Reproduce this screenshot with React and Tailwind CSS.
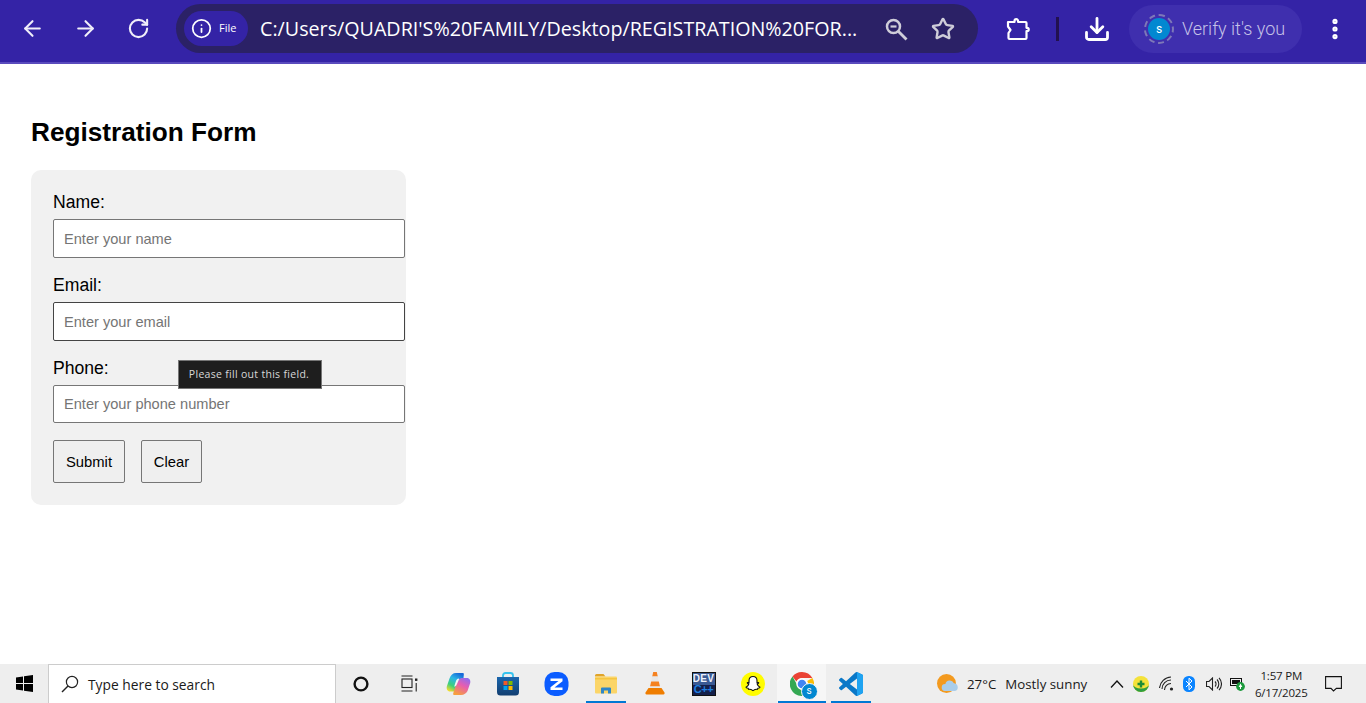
import React from "react";
import { ArrowLeft, ArrowRight, RotateCw, Info, Star, Download, EllipsisVertical } from "lucide-react";

const Puzzle = () => (
  <svg width="26" height="26" viewBox="0 0 26 26" fill="none" stroke="white" strokeWidth="2.200" strokeLinejoin="round">
    <path d="M3 6h6.500V5a1.800 1.800 0 0 1 3.600 0v1h7.400a1 1 0 0 1 1 1v4.800h.6a1.600 1.600 0 0 1 0 3.200h-.6v7a1 1 0 0 1-1 1H4.500a1 1 0 0 1-1-1v-5L5.500 14 3 10.500z" />
  </svg>
);

const ZoomGlass = () => (
  <svg width="24" height="24" viewBox="0 0 24 24" fill="none" stroke="#cfcdd9" strokeWidth="2.500">
    <circle cx="9.500" cy="9.500" r="6.500" />
    <path d="M6.500 9.500h6" strokeWidth="2.200" />
    <path d="m14.500 14.500 8 8" strokeWidth="2.800" />
  </svg>
);

const Win = () => (
  <svg width="17" height="17" viewBox="0 0 17 17" fill="#000">
    <path d="M0 2.400 7 1.400V8H0zM8 1.300 17 0v8H8zM0 9h7v6.600l-7-1zM8 9h9v8l-9-1.300z" />
  </svg>
);

const SearchGlass = () => (
  <svg width="18" height="18" viewBox="0 0 18 18" fill="none" stroke="#222" strokeWidth="1.200">
    <circle cx="11" cy="7" r="5.600" />
    <path d="M7 11 1 17" strokeWidth="1.500" />
  </svg>
);

const Cortana = () => (
  <svg width="16" height="16" viewBox="0 0 16 16" fill="none" stroke="#111" strokeWidth="2.400">
    <circle cx="8" cy="8" r="6.400" />
  </svg>
);

const TaskView = () => (
  <svg width="17" height="17" viewBox="0 0 17 17" fill="none" stroke="#222" strokeWidth="1.100">
    <path d="M.5 1h11M.5 16h11" />
    <rect x="1" y="4" width="10" height="8.500" />
    <rect x="14" y="3.500" width="2.400" height="2.400" fill="#222" stroke="none" />
    <path d="M15.200 8v8.500" />
  </svg>
);

const Copilot = () => (
  <svg width="25" height="24" viewBox="0 0 25 24">
    <defs>
      <linearGradient id="cpa" x1="0.700" y1="0" x2="0.200" y2="1">
        <stop offset="0" stopColor="#1769d8" />
        <stop offset="0.350" stopColor="#2bb6e6" />
        <stop offset="0.700" stopColor="#3fcf7a" />
        <stop offset="1" stopColor="#f4dc2c" />
      </linearGradient>
      <linearGradient id="cpb" x1="0.800" y1="0" x2="0.300" y2="1">
        <stop offset="0" stopColor="#8f6cf0" />
        <stop offset="0.450" stopColor="#e75db0" />
        <stop offset="1" stopColor="#f7a03c" />
      </linearGradient>
    </defs>
    <path d="M10 1h7c.8 0 1 .8.800 1.500L17.500 6l-2 5.500-3 6c-.8 1.500-2.500 2-4 2H4C1.500 19.500.2 17 .8 14.500L3.500 6.500C4.500 3 7 1 10 1z" fill="url(#cpa)" />
    <path d="M15 23H8c-.8 0-1-.8-.8-1.500l.4-1.500 2-6 3-6c.8-1.500 2.500-2 4-2H21c2.500 0 3.800 2.500 3.200 5l-2.700 8C20.500 21 18 23 15 23z" fill="url(#cpb)" />
    <path d="M12.500 6.500c-1 .3-2 1-2.500 2.500l-1.800 5.500c.7 0 1.700-.4 2.300-1.500l2.500-5.500c.2-.5.200-.8-.5-1z" fill="#f4f4f4" />
  </svg>
);

const Store = () => (
  <svg width="24" height="24" viewBox="0 0 24 24">
    <defs>
      <linearGradient id="stg" x1="0" y1="0" x2="0" y2="1">
        <stop offset="0" stopColor="#1a66ad" />
        <stop offset="1" stopColor="#123e70" />
      </linearGradient>
    </defs>
    <path d="M7 6V3.500C7 2 8 1 9.500 1h5C16 1 17 2 17 3.500V6" fill="none" stroke="#36c3ee" strokeWidth="1.800" />
    <path d="M1 5h22v15a3.500 3.500 0 0 1-3.500 3.500h-15A3.500 3.500 0 0 1 1 20z" fill="url(#stg)" />
    <rect x="7.500" y="9" width="4" height="4" fill="#f05a28" />
    <rect x="12.500" y="9" width="4" height="4" fill="#7fba00" />
    <rect x="7.500" y="14" width="4" height="4" fill="#00a4ef" />
    <rect x="12.500" y="14" width="4" height="4" fill="#ffb900" />
  </svg>
);

const Zoom = () => (
  <svg width="25" height="24" viewBox="0 0 25 24">
    <rect x="0.500" y="0" width="24" height="24" rx="10" fill="#0b5cff" />
    <path d="M6.500 6.500h12v2.800l-8 6.200h8v2.500h-12v-2.800l8-6.200h-8z" fill="#fff" />
  </svg>
);

const Explorer = () => (
  <svg width="22" height="20" viewBox="0 0 22 20">
    <path d="M0 1.500A1.500 1.500 0 0 1 1.500 0h7l2 2.500H0z" fill="#e0a42a" />
    <rect x="0" y="2.500" width="22" height="17" rx="1" fill="#fbd568" />
    <rect x="0" y="4" width="22" height="1.500" fill="#f5c542" />
    <path d="M6 19.500v-5a1 1 0 0 1 1-1h8a1 1 0 0 1 1 1v5h-3v-3h-4v3z" fill="#2f86c7" />
  </svg>
);

const Vlc = () => (
  <svg width="20" height="23" viewBox="0 0 20 23">
    <path d="M8.200 0h3.600l1 4.500H7.200z" fill="#f58220" />
    <path d="M7.200 4.500h5.600l1 5H6.200z" fill="#e8e8e8" />
    <path d="M6.200 9.500h7.600l1.200 5H5z" fill="#f58220" />
    <path d="M5 14.500h10l.6 2H4.400z" fill="#e8e8e8" />
    <path d="M3.500 16h13l3 4.500c.3 1-.2 2-1 2H1.500c-.8 0-1.300-1-1-2z" fill="#ef7d00" />
  </svg>
);

const DevCpp = () => (
  <div className="flex h-[24px] w-[24px] flex-col items-center overflow-hidden border border-[#111] bg-[#14204a] font-['Liberation_Sans',sans-serif] font-bold leading-none">
    <span className="flex h-[12px] w-full items-center justify-center bg-[#3a5a94] text-[10px] tracking-[0.3px] text-[#eef2fa]">DEV</span>
    <span className="mt-[-1px] text-[11px] tracking-[-0.5px] text-[#1f7fe0]">C++</span>
  </div>
);

const Snap = () => (
  <svg width="24" height="24" viewBox="0 0 24 24">
    <circle cx="12" cy="12" r="12" fill="#fffc00" />
    <path d="M12 4.500c2.600 0 4 1.900 4 4.200v2l1.500-.2c.5.400.2 1-1.300 1.500.4 1.400 1.500 2.700 2.800 3.200 0 .7-1 1-2.100 1.100l-.4 1c-1.600-.3-2.700.1-4.500 1.300-1.800-1.200-2.900-1.600-4.500-1.300l-.4-1C6 16.200 5 15.900 5 15.200c1.300-.5 2.400-1.800 2.800-3.200-1.500-.5-1.800-1.100-1.300-1.500l1.500.2v-2c0-2.300 1.400-4.200 4-4.200z" fill="#fff" stroke="#111" strokeWidth="1.100" />
  </svg>
);

const Chrome = () => (
  <div className="relative h-[24px] w-[24px]">
    <svg width="24" height="24" viewBox="0 0 24 24">
      <path d="M12 0a12 12 0 0 1 10.400 6H12a6 6 0 0 0-5.600 3.600L2.500 4.500A12 12 0 0 1 12 0z" fill="#ea4335" />
      <path d="M22.400 6A12 12 0 0 1 12 24l5.200-9A6 6 0 0 0 17.200 9z" fill="#fbbc05" />
      <path d="M12 24A12 12 0 0 1 2.500 4.500l5 9A6 6 0 0 0 12 18z" fill="#34a853" />
      <circle cx="12" cy="12" r="5" fill="#4285f4" stroke="#fff" strokeWidth="1.400" />
    </svg>
    <span className="absolute bottom-[-4px] right-[-4px] flex h-[17px] w-[17px] items-center justify-center rounded-full border border-[#f6f6f6] bg-[#0288d1] font-['Roboto',sans-serif] text-[10px] leading-none text-white">s</span>
  </div>
);

const VSCode = () => (
  <svg width="24" height="24" viewBox="0 0 24 24">
    <path d="M23.150 2.587 18.210.21a1.494 1.494 0 0 0-1.705.29l-9.460 8.630-4.120-3.128a.999.999 0 0 0-1.276.057L.327 7.261A1 1 0 0 0 .326 8.740L3.899 12 .326 15.260a1 1 0 0 0 .001 1.479L1.650 17.940a.999.999 0 0 0 1.276.057l4.120-3.128 9.460 8.630a1.492 1.492 0 0 0 1.704.290l4.942-2.377A1.500 1.500 0 0 0 24 20.060V3.939a1.500 1.500 0 0 0-.850-1.352zm-5.146 14.861L10.826 12l7.178-5.448v10.896z" fill="#0a78c8" />
    <path d="M18.004 0.100 23.150 2.587A1.500 1.500 0 0 1 24 3.939V20.060a1.500 1.500 0 0 1-.850 1.352L18.004 23.900V0.100z" fill="#1fa3f1" />
  </svg>
);

const Weather = () => (
  <svg width="22" height="21" viewBox="0 0 22 21">
    <circle cx="9.500" cy="10.500" r="9.500" fill="#f39a1f" />
    <path d="M8 18a3.500 3.500 0 0 1 .4-7 4.500 4.500 0 0 1 8.500-.8A4 4 0 0 1 18 18z" fill="#a9cdea" />
  </svg>
);

const Caret = () => (
  <svg width="14" height="8" viewBox="0 0 14 8" fill="none" stroke="#111" strokeWidth="1.300">
    <path d="M1 7.500 7 1l6 6.500" />
  </svg>
);

const GreenTray = () => (
  <svg width="16" height="16" viewBox="0 0 16 16">
    <circle cx="8" cy="8" r="8" fill="#f4e23a" />
    <path d="M0 8a8 8 0 0 0 16 0 8 4.500 0 0 1-16 0z" fill="#2f9e3f" />
    <path d="M6.800 4.500h2.400v2.300h2.300v2.400H9.200v2.300H6.800V9.200H4.500V6.800h2.300z" fill="#1c8c36" />
  </svg>
);

const WifiTray = () => (
  <svg width="15" height="15" viewBox="0 0 15 15" fill="none" stroke="#222" strokeWidth="1.100">
    <path d="M.5 12A12 12 0 0 1 12 1M3 13a9 9 0 0 1 9-9M5.500 14A6.500 6.500 0 0 1 12 7.500" />
    <circle cx="12.500" cy="13" r="1.600" fill="#222" stroke="none" />
  </svg>
);

const Bt = () => (
  <svg width="12" height="16" viewBox="0 0 12 16">
    <rect width="12" height="16" rx="5.500" fill="#0a84ff" />
    <path d="M3 5l6 6-3 2.800V2.200L9 5l-6 6" fill="none" stroke="#fff" strokeWidth="1" />
  </svg>
);

const Vol = () => (
  <svg width="16" height="14" viewBox="0 0 16 14" fill="none" stroke="#222" strokeWidth="1.100">
    <path d="M.5 4.500h2.500L6.500 1v12L3 9.500H.5z" />
    <path d="M9 4.500a3.500 3.500 0 0 1 0 5M11 2.500a6.500 6.500 0 0 1 0 9M13 .8a9 9 0 0 1 0 12.400" />
  </svg>
);

const Batt = () => (
  <svg width="15" height="14" viewBox="0 0 15 14">
    <rect x="0.500" y="1.500" width="11" height="7" fill="none" stroke="#111" />
    <rect x="2" y="3" width="8" height="4" fill="#111" />
    <circle cx="10.500" cy="9.500" r="4.400" fill="#1c9a3c" />
    <path d="M10.500 6.500 8.700 10h3.600z" fill="#fff" />
    <rect x="10" y="10" width="1" height="2" fill="#fff" />
  </svg>
);

const Notif = () => (
  <svg width="17" height="16" viewBox="0 0 17 16" fill="none" stroke="#111" strokeWidth="1.100">
    <path d="M.6.600h15.800v11.800h-5L8.500 15 6 12.400H.6z" />
  </svg>
);

const Slot = ({ children, active, open }) => (
  <div className={`relative flex h-full w-[49px] items-center justify-center ${active ? "bg-[#f6f6f6]" : ""}`}>
    {children}
    {open && <span className={`absolute bottom-0 left-1/2 h-[2px] -translate-x-1/2 bg-[#0078d4] ${active ? "w-[48px]" : "w-[40px]"}`} />}
  </div>
);

const Field = ({ label, placeholder, dark, h, mb }) => (
  <div className={mb}>
    <label className="block text-[17.6px] leading-[20px] text-black">{label}</label>
    <input
      placeholder={placeholder}
      className={`mt-[7px] block w-[352px] rounded-[2px] border bg-white px-[10px] text-[14.6px] placeholder:text-[#757575] outline-none ${h} ${dark ? "border-[#444444]" : "border-[#767676]"}`}
    />
  </div>
);

export default function App() {
  return (
    <div className="flex h-[703px] w-[1366px] flex-col overflow-hidden bg-white font-['Liberation_Sans',Arial,sans-serif]">
      <header className="flex h-[64px] shrink-0 items-start border-b-2 border-[#5a4bbd] bg-[#3423a6] pt-[4px] text-white">
        <div className="flex h-[49px] w-[176px] shrink-0 items-center pl-[20px]">
          <ArrowLeft size={25} strokeWidth={2} className="text-[#f0eef9]" />
          <ArrowRight size={25} strokeWidth={2} className="ml-[28px] text-[#f0eef9]" />
          <RotateCw size={23} strokeWidth={2.2} className="ml-[29px] text-[#f0eef9]" />
        </div>
        <div className="flex h-[49px] w-[802px] shrink-0 items-center rounded-full bg-[#2b2166] pl-[8px]">
          <div className="flex h-[35px] w-[64px] items-center gap-[7px] rounded-full bg-[#3423a6] pl-[7px]">
            <Info size={21} strokeWidth={2} />
            <span className="font-['Open_Sans',sans-serif] text-[11px]">File</span>
          </div>
          <span className="ml-[12px] w-[600px] whitespace-nowrap font-['Open_Sans',sans-serif] text-[19.7px] text-white">
            C:/Users/QUADRI'S%20FAMILY/Desktop/REGISTRATION%20FOR...
          </span>
          <div className="ml-[24px]"><ZoomGlass /></div>
          <Star size={24} strokeWidth={2.4} className="ml-[23px] text-[#cfcdd9]" />
        </div>
        <div className="flex h-[49px] flex-1 items-center">
          <div className="ml-[27px]"><Puzzle /></div>
          <span className="ml-[25px] h-[24px] w-[3px] bg-[#22114f]" />
          <Download size={28} strokeWidth={2.400} className="ml-[24px]" />
          <div className="ml-[18px] flex h-[48px] w-[173px] items-center rounded-full bg-[#3f2fae] pl-[15px]">
            <div className="relative flex h-[30px] w-[30px] items-center justify-center rounded-full border-2 border-dashed border-[#7e78b8]">
              <span className="flex h-[22px] w-[22px] items-center justify-center rounded-full bg-[#0288d1] font-['Roboto',sans-serif] text-[12px] text-white">s</span>
            </div>
            <span className="ml-[8px] whitespace-nowrap font-['Roboto',sans-serif] text-[18px] font-light text-[#c5c2e8]">Verify it's you</span>
          </div>
          <EllipsisVertical size={26} strokeWidth={2.800} className="ml-[20px]" />
        </div>
      </header>

      <main className="flex-1 pl-[31px] pt-[51px]">
        <h2 className="text-[26.2px] font-bold leading-[34px] text-black">Registration Form</h2>
        <form className="relative mt-[21px] h-[335px] w-[375px] rounded-[10px] bg-[#f1f1f1] px-[22px] pt-[22px]">
          <Field label="Name:" placeholder="Enter your name" h="h-[39px]" mb="mb-[17px]" />
          <Field label="Email:" placeholder="Enter your email" dark h="h-[39px]" mb="mb-[17px]" />
          <Field label="Phone:" placeholder="Enter your phone number" h="h-[38px]" mb="mb-[17px]" />
          <div className="flex gap-[16px]">
            <button type="button" className="h-[43px] w-[72px] rounded-[2px] border border-[#767676] bg-[#efefef] pt-[2px] text-[14.8px] text-black">Submit</button>
            <button type="button" className="h-[43px] w-[61px] rounded-[2px] border border-[#767676] bg-[#efefef] pt-[2px] text-[14.8px] text-black">Clear</button>
          </div>
          <div className="absolute left-[147px] top-[190px] flex h-[29px] w-[144px] items-center justify-center border border-[#767676] bg-[#1e1e1e] pr-[2px] font-['Open_Sans',sans-serif] text-[10.500px] tracking-[0.3px] text-[#d8d8d8]">
            Please fill out this field.
          </div>
        </form>
      </main>

      <footer className="flex h-[39px] shrink-0 items-center bg-[#eeeeee] font-['Open_Sans',sans-serif] text-[#1a1a1a]">
        <div className="flex h-full w-[48px] items-center justify-center"><Win /></div>
        <div className="flex h-full w-[288px] items-center gap-[9px] border-x border-t border-[#cccccc] bg-white pl-[12px] text-[13.8px]">
          <SearchGlass />
          <span className="pt-[2px]">Type here to search</span>
        </div>
        <Slot><Cortana /></Slot>
        <Slot><TaskView /></Slot>
        <Slot><Copilot /></Slot>
        <Slot><Store /></Slot>
        <Slot><Zoom /></Slot>
        <Slot open><Explorer /></Slot>
        <Slot><Vlc /></Slot>
        <Slot><DevCpp /></Slot>
        <Slot><Snap /></Slot>
        <Slot active open><Chrome /></Slot>
        <Slot open><VSCode /></Slot>
        <div className="ml-[62px]"><Weather /></div>
        <span className="ml-[8px] whitespace-nowrap pt-[2px] text-[13.3px]">27°C</span>
        <span className="ml-[9px] whitespace-nowrap pt-[2px] text-[13.3px]">Mostly sunny</span>
        <div className="ml-[23px]"><Caret /></div>
        <div className="ml-[9px]"><GreenTray /></div>
        <div className="ml-[10px]"><WifiTray /></div>
        <div className="ml-[9px]"><Bt /></div>
        <div className="ml-[11px]"><Vol /></div>
        <div className="ml-[8px]"><Batt /></div>
        <div className="ml-[10px] flex w-[52px] flex-col items-center whitespace-nowrap text-[11.500px] leading-[17px] tracking-[-0.2px]">
          <span>1:57 PM</span>
          <span>6/17/2025</span>
        </div>
        <div className="ml-[18px]"><Notif /></div>
      </footer>
    </div>
  );
}
